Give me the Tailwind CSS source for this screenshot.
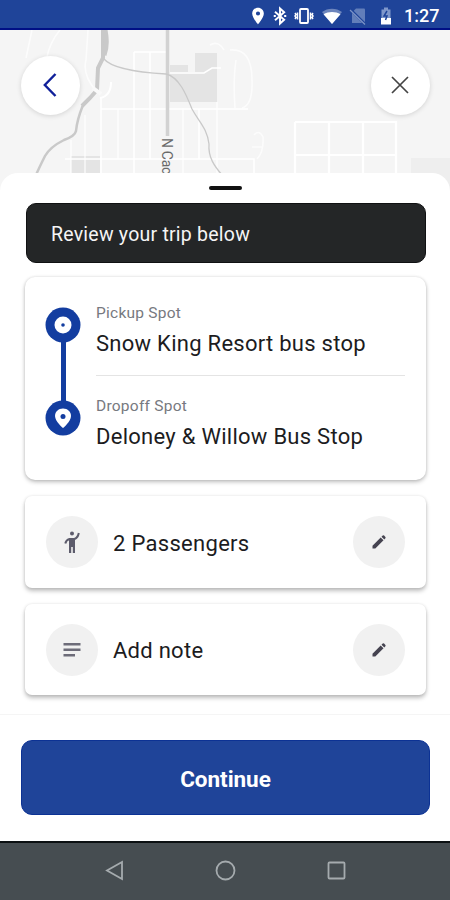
<!DOCTYPE html>
<html lang="en">
<head>
  <meta charset="UTF-8" />
  <meta name="viewport" content="width=device-width, initial-scale=1.0" />
  <title>Review your trip</title>
  <script src="https://cdn.jsdelivr.net/npm/@tailwindcss/browser@4"></script>
</head>
<body class="bg-white font-['Roboto',sans-serif]">
  <div class="w-[450px] h-[900px] flex flex-col overflow-hidden">

    <!-- Status bar -->
    <header class="h-[30px] shrink-0 bg-[#1f4499] border-b-2 border-[#000f85] flex items-center justify-end pr-[11px] pt-[3px] text-white">
      <svg class="w-5 h-5" viewBox="0 0 24 24" fill="currentColor"><path d="M12 2C8.1 2 5 5.1 5 9c0 5.2 7 13 7 13s7-7.800 7-13c0-3.900-3.100-7-7-7zm0 9.500a2.500 2.500 0 1 1 0-5 2.500 2.500 0 0 1 0 5z"/></svg>
      <svg class="w-5 h-5 ml-[2px]" viewBox="0 0 24 24" fill="none" stroke="currentColor" stroke-width="2.300"><path d="M6 7l11 9.500-5 4.500V3l5 4.500L6 17"/><path d="M4.500 12H7M17 12h2.500"/></svg>
      <svg class="w-[20px] h-5 ml-[4px]" viewBox="0 0 20 20" fill="none" stroke="currentColor" stroke-width="1.500"><rect x="6" y="3" width="8" height="14" rx="1" stroke-width="1.800"/><path d="M3.500 6.500v7M1 7l1 1.500-1 1.500 1 1.500-1 1.500M16.500 6.500v7M19 7l-1 1.500 1 1.500-1 1.500 1 1.500"/></svg>
      <svg class="w-[20px] h-5 ml-[8px]" viewBox="0 0 20 20" fill="currentColor"><path opacity=".35" d="M0 6C5.500 1.500 14.500 1.500 20 6L10 18z"/><path d="M1.500 8.200C6.500 5.200 13.500 5.200 18.500 8.200L10 18z"/></svg>
      <svg class="w-[18px] h-5 ml-[7px]" viewBox="0 0 18 20"><path fill="#627eba" d="M7 2.500h8a1 1 0 0 1 1 1V17H3V6.500z"/><path d="M1.500 3.500L16 18" stroke="#1f4499" stroke-width="2.500"/><path d="M1 4L16 18.500" stroke="#7b92c6" stroke-width="1.300"/></svg>
      <svg class="w-[12px] h-5 ml-[13px]" viewBox="0 0 12 20"><path fill="#7f97cb" d="M4 1.500h4v2h2.500V13h-9V3.500H4z"/><path fill="#fff" d="M1 12h10v6.500H1z"/><path d="M7 5L4 10h3l-1.500 4" stroke="#1f4499" stroke-width="1.500" fill="none"/></svg>
      <span class="ml-[12px] w-[35px] text-[18px] leading-5 font-medium whitespace-nowrap">1:27</span>
    </header>

    <!-- Map -->
    <section class="relative h-[163px] shrink-0 bg-[#f5f5f5]">
      <svg class="block w-[450px] h-[163px]" viewBox="0 30 450 163" fill="none">
        <g fill="#e4e4e4">
          <path d="M195 53h22v49h-47V65h18v7h7z"/>
          <path d="M71 156h29v20H71z"/>
          <path fill="#eeeeee" d="M411 158h39v35h-39z"/>
        </g>
        <g stroke="#fff" stroke-width="1.600">
          <path opacity=".7" d="M32 30l-6 28M60 30q-10 12-13 27M88 30l-2 30q-4 14 10 31M71 140v40M85 115v58M118 109v50M183 108v65M217 102v71M230 50q22-2 22 30 1 25-10 28M236 60q-3 20-1 48M210 45q8-5 14 5M254 135q5-6 9 2 1 15-6 22M252 147h10"/>
          <path d="M101 98v75M101 109h147M65 159h185M134 52v121M150 52v107M134 52h32M170 73h34l8-5h9M199 109v50M226 159h28v18"/>
          <path stroke-width="2.200" d="M295 122h101v60M295 122v60M329 122v60M363 122v60M295 155h101"/>
          <path stroke-width="2" d="M100 98q11-2 11-16"/>
        </g>
        <g stroke="#c9c9c9">
          <path stroke-width="3.500" stroke="#d2d2d2" d="M167.500 30v106"/>
          <path stroke-width="1.300" d="M104 59q10 12 62 15c13 3 20 20 26 35 7 13 15 19 17 35-1 13 5 22 14 32"/>
          <path stroke-width="4" d="M103 30v28l-5 10-1 22-7 8-8 8"/>
          <path stroke-width="5" d="M105 30q3 15-1 25"/>
          <path stroke-width="2.500" d="M83 105q-6 15-7 26-1 5-12 9-14 7-19 16-6 12-9 19"/>
        </g>
        <path d="M93 88l8 6" stroke="#f9f9f9" stroke-width="4"/>
      </svg>
      <span class="absolute left-[159px] top-[108px] [writing-mode:vertical-rl] text-[14px] leading-4 tracking-[-0.3px] text-[#6a6a6a] whitespace-nowrap">N Cache St</span>
      <button class="absolute left-[20.5px] top-[25.5px] size-[59.5px] rounded-full bg-white shadow-[0_1px_5px_rgba(0,0,0,0.14)] flex items-center justify-center">
        <svg class="w-[14px] h-[24px]" viewBox="0 0 14 24" fill="none" stroke="#10209a" stroke-width="2.400"><path d="M12.500 1L1.800 12l10.700 11"/></svg>
      </button>
      <button class="absolute left-[370.5px] top-[25.5px] size-[59.5px] rounded-full bg-white shadow-[0_1px_5px_rgba(0,0,0,0.14)] flex items-center justify-center">
        <svg class="w-[18px] h-[18px]" viewBox="0 0 18 18" stroke="#444" stroke-width="1.700"><path d="M1 1l16 16M17 1L1 17"/></svg>
      </button>
    </section>

    <!-- Trip sheet -->
    <main class="relative -mt-[20px] h-[668px] shrink-0 rounded-t-[18px] bg-white flex flex-col">
      <div class="w-[33px] h-[4px] mt-[13px] ml-[209px] rounded-sm bg-[#111]"></div>

      <h1 class="mt-[13px] ml-[25.5px] w-[400px] h-[60px] shrink-0 rounded-[10px] bg-[#242627] border border-[#101112] flex items-center pl-[24.5px] pt-[3px] text-[19.5px] tracking-[0.23px] text-[#f5f5f5]">Review your trip below</h1>

      <section class="mt-[14px] ml-[25px] w-[401px] h-[203px] shrink-0 rounded-[10px] bg-white shadow-[0_2px_4px_rgba(0,0,0,0.25),0_0_3px_rgba(0,0,0,0.1)] flex pl-[20px] pr-[21px]">
        <div class="w-[36px] pt-[30px] flex flex-col items-center">
          <svg class="size-[36px]" viewBox="0 0 36 36"><circle cx="18" cy="18" r="17.500" fill="#133da0"/><circle cx="18" cy="18" r="8.500" fill="#fff"/><circle cx="18" cy="18" r="1.800" fill="#133da0"/></svg>
          <div class="w-[5px] h-[59px] -my-px bg-[#133da0]"></div>
          <svg class="size-[36px]" viewBox="0 0 36 36"><circle cx="18" cy="18" r="17.500" fill="#133da0"/><path d="M18 8.500c-4.700 0-8 3.300-8 7.500 0 5.500 8 12 8 12s8-6.500 8-12c0-4.200-3.300-7.500-8-7.500z" fill="#fff"/><circle cx="18" cy="16.500" r="2.500" fill="#133da0"/></svg>
        </div>
        <div class="ml-[15px] flex-1 pt-[26px] whitespace-nowrap">
          <div class="h-[73px] border-b border-[#e4e4e4]">
            <p class="text-[15.5px] leading-5 tracking-[0.25px] text-[#777980]">Pickup Spot</p>
            <p class="mt-[6px] text-[22px] leading-[30px] tracking-[0.27px] text-[#1c1c1e]">Snow King Resort bus stop</p>
          </div>
          <div class="pt-[20px]">
            <p class="text-[15.5px] leading-5 tracking-[0.25px] text-[#777980]">Dropoff Spot</p>
            <p class="mt-[6px] text-[22px] leading-[30px] tracking-[0.27px] text-[#1c1c1e]">Deloney &amp; Willow Bus Stop</p>
          </div>
        </div>
      </section>

      <section class="mt-[16px] ml-[25px] w-[401px] h-[92px] shrink-0 rounded-[7px] bg-white shadow-[0_3px_4px_rgba(0,0,0,0.25),0_0_3px_rgba(0,0,0,0.1)] flex items-center pl-[21px] pr-[21px]">
        <div class="size-[52px] rounded-full bg-[#f1f1f1] flex items-center justify-center">
          <svg class="w-[16px] h-[22px]" viewBox="0 0 16 22" fill="none" stroke="#5d5c6c"><circle cx="8" cy="2.500" r="2" fill="#5d5c6c" stroke="none"/><path d="M14.800 2q-.800 4.500-4.300 6H5.500Q2 9 1.300 12.500" stroke-width="2"/><path d="M5 7h6v15H8.800v-6H7.200v6H5z" fill="#5d5c6c" stroke="none"/></svg>
        </div>
        <p class="ml-[15px] flex-1 pt-[2px] text-[22px] tracking-[0.3px] text-[#1c1c1e]">2 Passengers</p>
        <button class="size-[52px] rounded-full bg-[#f1f1f1] flex items-center justify-center">
          <svg class="w-[14px] h-[14px]" viewBox="0 0 14 14" fill="#454350"><path d="M.500 10.700L8.700 2.500l2.800 2.800-8.200 8.200H.500zM9.500 1.700L10.700.600q.700-.500 1.400 0l1.300 1.300q.500.700 0 1.400l-1.100 1.200z"/></svg>
        </button>
      </section>

      <section class="mt-[16px] ml-[25px] w-[401px] h-[91px] shrink-0 rounded-[7px] bg-white shadow-[0_3px_4px_rgba(0,0,0,0.25),0_0_3px_rgba(0,0,0,0.1)] flex items-center pl-[21px] pr-[21px]">
        <div class="size-[52px] rounded-full bg-[#f1f1f1] flex items-center justify-center">
          <svg class="w-[18px] h-[14px]" viewBox="0 0 18 14" fill="#6d6c79"><path d="M.500 0h17v2.500H.500zM.500 5.500h17V8H.500zM.500 11h11.500v2.500H.500z"/></svg>
        </div>
        <p class="ml-[15px] flex-1 pt-[2px] text-[22px] tracking-[0.27px] text-[#1c1c1e]">Add note</p>
        <button class="size-[52px] rounded-full bg-[#f1f1f1] flex items-center justify-center">
          <svg class="w-[14px] h-[14px]" viewBox="0 0 14 14" fill="#454350"><path d="M.500 10.700L8.700 2.500l2.800 2.800-8.200 8.200H.500zM9.500 1.700L10.700.600q.700-.500 1.400 0l1.300 1.300q.500.700 0 1.400l-1.100 1.200z"/></svg>
        </button>
      </section>

      <div class="mt-[19px] border-t border-[#f5f5f5] pt-[25px] pl-[21px] pr-[20px]">
        <button class="w-full h-[75px] rounded-[11px] bg-[#1f4499] border border-[#0c3294] flex items-center justify-center pt-[4px] text-[22.5px] tracking-[-0.05px] font-bold text-white">Continue</button>
      </div>
    </main>

    <!-- Navigation bar -->
    <nav class="flex-1 bg-[#464d51] border-t-2 border-[#0b1012] flex items-start pt-[17px] pl-[104px]">
      <svg class="size-[22px]" viewBox="0 0 22 22" fill="none" stroke="#a5abae" stroke-width="1.800"><path d="M18 2v17L3 10.500z"/></svg>
      <svg class="size-[22px] ml-[88px]" viewBox="0 0 22 22" fill="none" stroke="#a5abae" stroke-width="1.800"><circle cx="11.500" cy="10.500" r="9"/></svg>
      <svg class="size-[22px] ml-[89px]" viewBox="0 0 22 22" fill="none" stroke="#a5abae" stroke-width="1.800"><rect x="3.500" y="2.500" width="16" height="16" rx="1"/></svg>
    </nav>
  </div>
</body>
</html>
